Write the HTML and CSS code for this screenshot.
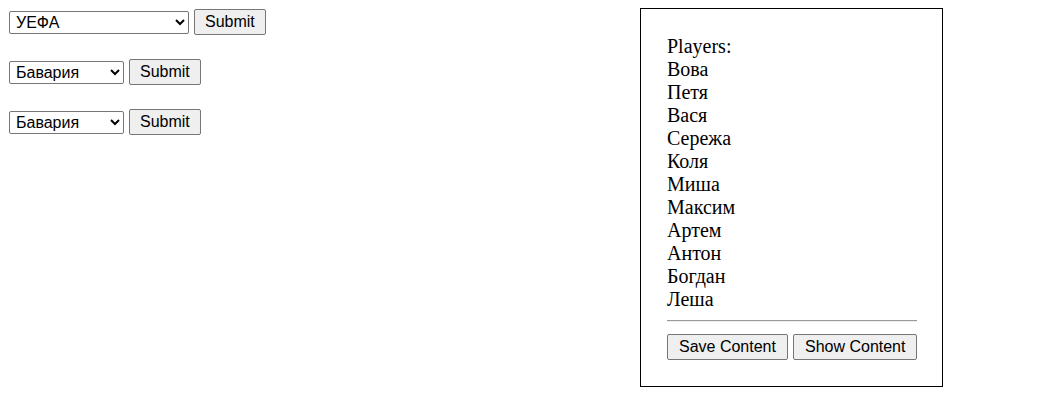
FILE: index.html
```html
<!DOCTYPE html>
<html>
<head>
<meta charset="utf-8">
<link rel="stylesheet" href="styles.css">
</head>
<body>
<div class="page">
  <div class="forms">
    <form class="row">
      <select class="sel sel-wide"><option>УЕФА</option></select>
      <button type="button" class="btn">Submit</button>
    </form>
    <form class="row">
      <select class="sel sel-narrow"><option>Бавария</option></select>
      <button type="button" class="btn">Submit</button>
    </form>
    <form class="row">
      <select class="sel sel-narrow"><option>Бавария</option></select>
      <button type="button" class="btn">Submit</button>
    </form>
  </div>
  <div class="panel">
    <div class="list">
      <div>Players:</div>
      <div>Вова</div>
      <div>Петя</div>
      <div>Вася</div>
      <div>Сережа</div>
      <div>Коля</div>
      <div>Миша</div>
      <div>Максим</div>
      <div>Артем</div>
      <div>Антон</div>
      <div>Богдан</div>
      <div>Леша</div>
    </div>
    <hr class="rule">
    <div class="actions">
      <button type="button" class="btn">Save Content</button>
      <button type="button" class="btn">Show Content</button>
    </div>
  </div>
</div>
</body>
</html>
```
FILE: styles.css
```css
html, body {
  margin: 0;
  padding: 0;
  background: #fff;
}
body {
  padding: 8px;
  font-family: "Liberation Serif", "Times New Roman", serif;
  font-size: 20px;
  color: #000;
}
.page {
  display: flex;
  align-items: flex-start;
}
.forms {
  flex: none;
  box-sizing: border-box;
  width: 632px;
  display: flex;
  flex-direction: column;
  gap: 24px;
  padding: 1px 0 0 1px;
}
.row {
  display: flex;
  align-items: center;
  gap: 5px;
  margin: 0;
  height: 26px;
}
.sel {
  flex: none;
  font-family: "Liberation Sans", Arial, sans-serif;
  font-size: 16px;
  height: 23px;
  margin: 0;
  color: #000;
  background: #fff;
  border: 1px solid #767676;
  border-radius: 2px;
  padding: 0 0 0 2px;
}
.sel-wide { width: 180px; }
.sel-narrow { width: 115px; }
.btn {
  flex: none;
  white-space: nowrap;
  font-family: "Liberation Sans", Arial, sans-serif;
  font-size: 16px;
  height: 26px;
  margin: 0;
  padding: 0 10px;
  color: #000;
  background: #efefef;
  border: 1px solid #767676;
  border-radius: 2px;
}
.panel {
  flex: none;
  box-sizing: border-box;
  width: 303px;
  height: 379px;
  border: 1px solid #000;
  padding: 26px 25px 0 26px;
}
.list div {
  line-height: 23px;
}
.rule {
  margin: 9px 0 12px 0;
  border: 0;
  border-top: 1px solid #9a9a9a;
  border-bottom: 1px solid #eeeeee;
  height: 0;
}
.actions {
  display: flex;
  gap: 5px;
}
.actions .btn {
  padding: 0 11px;
}
```
